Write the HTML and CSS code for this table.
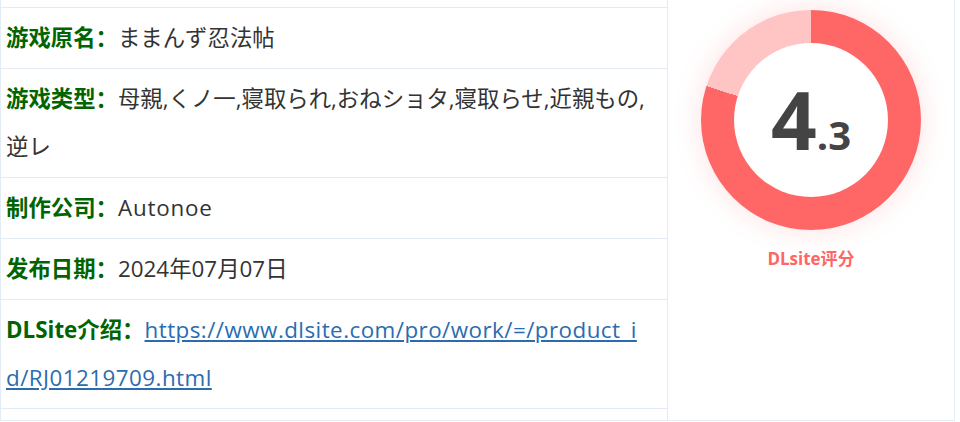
FILE: index.html
```html
<!DOCTYPE html>
<html lang="zh-CN">
<head>
<meta charset="utf-8">
<title>游戏信息</title>
<link rel="stylesheet" href="styles.css">
</head>
<body>
<div class="wrap">
  <div class="info">
    <div class="row row-prev"></div>
    <div class="row"><span class="label">游戏原名：</span><span class="value">ままんず忍法帖</span></div>
    <div class="row"><span class="label">游戏类型：</span><span class="value">母親,くノ一,寝取られ,おねショタ,寝取らせ,近親もの,逆レ</span></div>
    <div class="row"><span class="label">制作公司：</span><span class="value latin">Autonoe</span></div>
    <div class="row"><span class="label">发布日期：</span><span class="value">2024年07月07日</span></div>
    <div class="row"><span class="label">DLSite介绍：</span><a class="link" href="#">https://www.dlsite.com/pro/work/=/product_id/RJ01219709.html</a></div>
    <div class="fill"></div>
  </div>
  <div class="score">
    <div class="donut">
      <div class="donut-inner">
        <span class="big">4</span><span class="small">.3</span>
      </div>
    </div>
    <div class="score-label">DLsite评分</div>
  </div>
</div>
</body>
</html>
```

FILE: styles.css
```css
*, *::before, *::after {
  box-sizing: border-box;
}
html, body {
  margin: 0;
  padding: 0;
  background: #fff;
}
body {
  font-family: "Open Sans", "Noto Sans CJK SC", "Noto Sans CJK JP", sans-serif;
  color: #333;
}
.wrap {
  display: flex;
  width: 955px;
  height: 421px;
  border-left: 1px solid #e3ecf5;
  border-right: 1px solid #e3ecf5;
  border-bottom: 1px solid #e3ecf5;
}
.info {
  width: 667px;
  flex: none;
  display: flex;
  flex-direction: column;
  border-right: 1px solid #e3ecf5;
}
.row {
  padding: 6px 18px 6px 5px;
  line-height: 48px;
  font-size: 22.4px;
  border-bottom: 1px solid #e3ecf5;
  word-break: break-all;
}
.row.row-prev {
  height: 8px;
  padding: 0;
}
.fill {
  flex: 1;
}
.label {
  color: #006400;
  font-weight: bold;
}
.value {
  color: #333;
}
.value.latin {
  letter-spacing: 0.8px;
}
.link {
  color: #2b6cb0;
  text-decoration: underline;
  letter-spacing: 0.45px;
}
.score {
  flex: 1;
  display: flex;
  flex-direction: column;
  align-items: center;
  padding-top: 10px;
}
.donut {
  width: 220px;
  height: 220px;
  border-radius: 50%;
  background: conic-gradient(#ff6666 0deg 288deg, #ffc5c5 288deg 360deg);
  box-shadow: 0 0 28px rgba(255, 102, 102, 0.2);
  display: flex;
  align-items: center;
  justify-content: center;
}
.donut-inner {
  width: 154px;
  height: 154px;
  border-radius: 50%;
  background: #fff;
  display: flex;
  align-items: baseline;
  justify-content: center;
  color: #444;
  font-weight: bold;
  line-height: 1;
  padding-top: 36px;
}
.big {
  font-size: 80px;
}
.small {
  font-size: 40px;
}
.score-label {
  margin-top: 18px;
  color: #ff6666;
  font-weight: bold;
  font-size: 17px;
  line-height: 22px;
}
```
